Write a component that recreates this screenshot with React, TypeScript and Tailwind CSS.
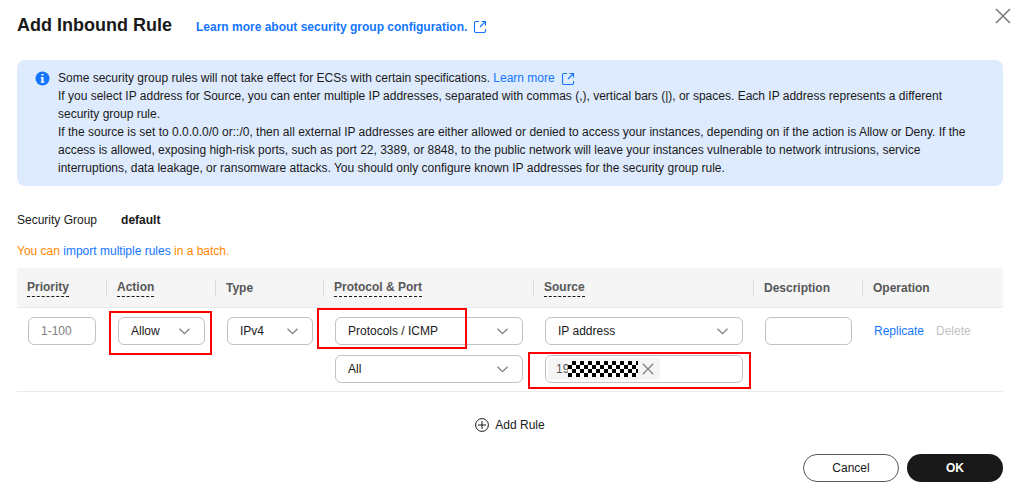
import { useState, type ReactNode } from "react";

const linkClass = "text-[#1476ff] hover:underline";
const fieldClass =
  "h-7 w-full rounded-md border border-[#c2c2c2] bg-white text-xs text-[#191919] outline-none focus:border-[#1476ff]";

function ExternalIcon({ className = "" }: { className?: string }) {
  return (
    <svg
      className={`inline-block h-[14px] w-[14px] ${className}`}
      viewBox="0 0 14 14"
      fill="none"
      stroke="currentColor"
      strokeWidth="1.1"
      aria-hidden="true"
    >
      <path d="M6 1.500H3a1.500 1.500 0 0 0-1.500 1.500v8a1.500 1.500 0 0 0 1.500 1.500h8a1.500 1.500 0 0 0 1.500-1.500V9" />
      <path d="M8.500 1.500h4v4M12.500 1.500L7 7" />
    </svg>
  );
}

function CloseIcon({ size }: { size: number }) {
  return (
    <svg width={size} height={size} viewBox="0 0 16 16" fill="none" stroke="#808080" strokeWidth="1.700" aria-hidden="true">
      <path d="M1 1l14 14M15 1L1 15" />
    </svg>
  );
}

function Select({ label, options }: { label: string; options: string[] }) {
  return (
    <div className="relative">
      <select aria-label={label} className={`${fieldClass} appearance-none pl-3 pr-7`}>
        {options.map((option) => (
          <option key={option}>{option}</option>
        ))}
      </select>
      <svg
        className="pointer-events-none absolute right-[15px] top-[11px]"
        width="11"
        height="7"
        viewBox="0 0 11 7"
        fill="none"
        stroke="#808080"
        strokeWidth="1.300"
        aria-hidden="true"
      >
        <path d="M0.500 0.700L5.500 5.700L10.500 0.700" />
      </svg>
    </div>
  );
}

// Red frame around the settings the reader should fill in
function Highlight({ className, children }: { className: string; children: ReactNode }) {
  return (
    <div className="relative">
      {children}
      <div className={`pointer-events-none absolute border-2 border-[#ff0000] ${className}`} />
    </div>
  );
}

function AddressTag({ onRemove }: { onRemove: () => void }) {
  return (
    <span className="flex h-[22px] shrink-0 items-center rounded bg-[#f5f5f5] pl-2 pr-1.5">
      <span className="w-3 overflow-hidden text-[#575757]">19</span>
      <svg width="70" height="16" aria-hidden="true">
        <defs>
          <pattern id="mask" width="8" height="8" patternUnits="userSpaceOnUse">
            <rect width="8" height="8" fill="#fff" />
            <path d="M4 0h4v4H4zM0 4h4v4H0z" fill="#000" />
          </pattern>
        </defs>
        <rect width="70" height="16" fill="url(#mask)" shapeRendering="crispEdges" />
      </svg>
      <button type="button" aria-label="Remove address" onClick={onRemove} className="ml-1">
        <CloseIcon size={12} />
      </button>
    </span>
  );
}

export default function App() {
  const [hasAddress, setHasAddress] = useState(true);

  const columns = [
    { label: "Priority", hint: true },
    { label: "Action", hint: true },
    { label: "Type", hint: false },
    { label: "Protocol & Port", hint: true },
    { label: "Source", hint: true },
    { label: "Description", hint: false },
    { label: "Operation", hint: false },
  ];

  return (
    <div className="bg-white pr-[27px] pb-[9px] pl-[17px] font-['Liberation_Sans',Arial,sans-serif] text-xs text-[#191919]">
      {/* Title */}
      <header className="flex justify-between pt-2">
        <div className="flex items-baseline gap-6 pt-[5px]">
          <h1 className="text-lg leading-6 font-bold">Add Inbound Rule</h1>
          <a href="#" className={`${linkClass} flex items-center gap-1.5 font-bold`}>
            Learn more about security group configuration.
            <ExternalIcon />
          </a>
        </div>
        <button type="button" aria-label="Close" className="-mr-2 self-start">
          <CloseIcon size={16} />
        </button>
      </header>

      {/* Notice */}
      <section className="mt-[23px] flex gap-2 rounded-lg bg-[#deebff] py-[9px] pr-5 pl-[18px] leading-[18px]">
        <svg className="mt-0.5 shrink-0" width="15" height="15" viewBox="0 0 15 15" aria-hidden="true">
          <circle cx="7.500" cy="7.500" r="7" fill="#1476ff" />
          <path d="M6.500 3h2v1.600h-2zM5.800 6h2.700v4.600h.8v1.200H5.700v-1.200h.8V7.200h-.7z" fill="#fff" />
        </svg>
        <div>
          <p>
            Some security group rules will not take effect for ECSs with certain specifications.{" "}
            <a href="#" className={linkClass}>
              Learn more
              <ExternalIcon className="ml-1.5" />
            </a>
          </p>
          <p>
            If you select IP address for Source, you can enter multiple IP addresses, separated with commas (,),
            vertical bars (|), or spaces. Each IP address represents a different security group rule.
          </p>
          <p>
            If the source is set to 0.0.0.0/0 or::/0, then all external IP addresses are either allowed or denied to
            access your instances, depending on if the action is Allow or Deny. If the access is allowed, exposing
            high-risk ports, such as port 22, 3389, or 8848, to the public network will leave your instances vulnerable
            to network intrusions, service interruptions, data leakage, or ransomware attacks. You should only
            configure known IP addresses for the security group rule.
          </p>
        </div>
      </section>

      <div className="mt-[26px] flex gap-6">
        <span>Security Group</span>
        <span className="font-bold">default</span>
      </div>

      <p className="mt-[15px] text-[#ff8800]">
        You can{" "}
        <a href="#" className={linkClass}>
          import multiple rules
        </a>{" "}
        in a batch.
      </p>

      {/* Rules */}
      <table className="mt-[9px] w-full table-fixed border-separate border-spacing-0">
        <colgroup>
          <col className="w-[89px]" />
          <col className="w-[109px]" />
          <col className="w-[108px]" />
          <col className="w-[210px]" />
          <col />
          <col className="w-[109px]" />
          <col className="w-[141px]" />
        </colgroup>
        <thead>
          <tr>
            {columns.map((column, i) => (
              <th
                key={column.label}
                className="h-10 border-b border-[#ebebeb] bg-[#f5f5f5] p-0 text-left font-bold text-[#575757]"
              >
                <div className={`flex h-4 items-center pl-2.5 ${i > 0 ? "border-l border-[#dbdbdb]" : ""}`}>
                  {column.hint ? (
                    <span className="border-b border-dashed border-[#191919] pb-px">{column.label}</span>
                  ) : (
                    column.label
                  )}
                </div>
              </th>
            ))}
          </tr>
        </thead>
        <tbody>
          <tr className="align-top *:border-b *:border-[#ebebeb] *:pt-[9px] *:pr-2.5 *:pb-2 *:pl-3 *:first:pl-[11px]">
            <td>
              <input aria-label="Priority" placeholder="1-100" className={`${fieldClass} px-3 placeholder:text-[#808080]`} />
            </td>
            <td>
              <Highlight className="-top-1.5 -right-[7px] -bottom-2.5 -left-[9px]">
                <Select label="Action" options={["Allow", "Deny"]} />
              </Highlight>
            </td>
            <td>
              <Select label="Type" options={["IPv4", "IPv6"]} />
            </td>
            <td>
              <Highlight className="-top-[9px] right-14 -bottom-1 -left-[18px]">
                <Select label="Protocol" options={["Protocols / ICMP", "Protocols / TCP", "Protocols / UDP"]} />
              </Highlight>
              <div className="mt-2.5">
                <Select label="Port" options={["All"]} />
              </div>
            </td>
            <td>
              <Select label="Source" options={["IP address", "Security group"]} />
              <div className="mt-2.5">
                <Highlight className="-top-[3px] -right-2 -bottom-1.5 -left-[17px]">
                  <div className={`${fieldClass} flex items-center px-0.5`}>
                    {hasAddress && <AddressTag onRemove={() => setHasAddress(false)} />}
                    <input aria-label="IP addresses" className="min-w-0 flex-1 outline-none" />
                  </div>
                </Highlight>
              </div>
            </td>
            <td>
              <input aria-label="Description" className={`${fieldClass} px-3`} />
            </td>
            <td>
              <div className="flex h-7 items-center gap-3">
                <button type="button" className={linkClass}>
                  Replicate
                </button>
                <button type="button" disabled className="text-[#c2c2c2]">
                  Delete
                </button>
              </div>
            </td>
          </tr>
        </tbody>
      </table>

      <div className="mt-[25px] flex justify-center">
        <button type="button" className="flex items-center gap-1.5">
          <svg width="14" height="14" viewBox="0 0 14 14" fill="none" stroke="#191919" aria-hidden="true">
            <circle cx="7" cy="7" r="6.400" />
            <path d="M7 3v8M3 7h8" />
          </svg>
          Add Rule
        </button>
      </div>

      <footer className="mt-[21px] flex justify-end gap-2">
        <button type="button" className="h-7 w-24 rounded-full border border-[#595959] bg-white">
          Cancel
        </button>
        <button type="button" className="h-7 w-24 rounded-full bg-[#191919] font-bold text-white">
          OK
        </button>
      </footer>
    </div>
  );
}
